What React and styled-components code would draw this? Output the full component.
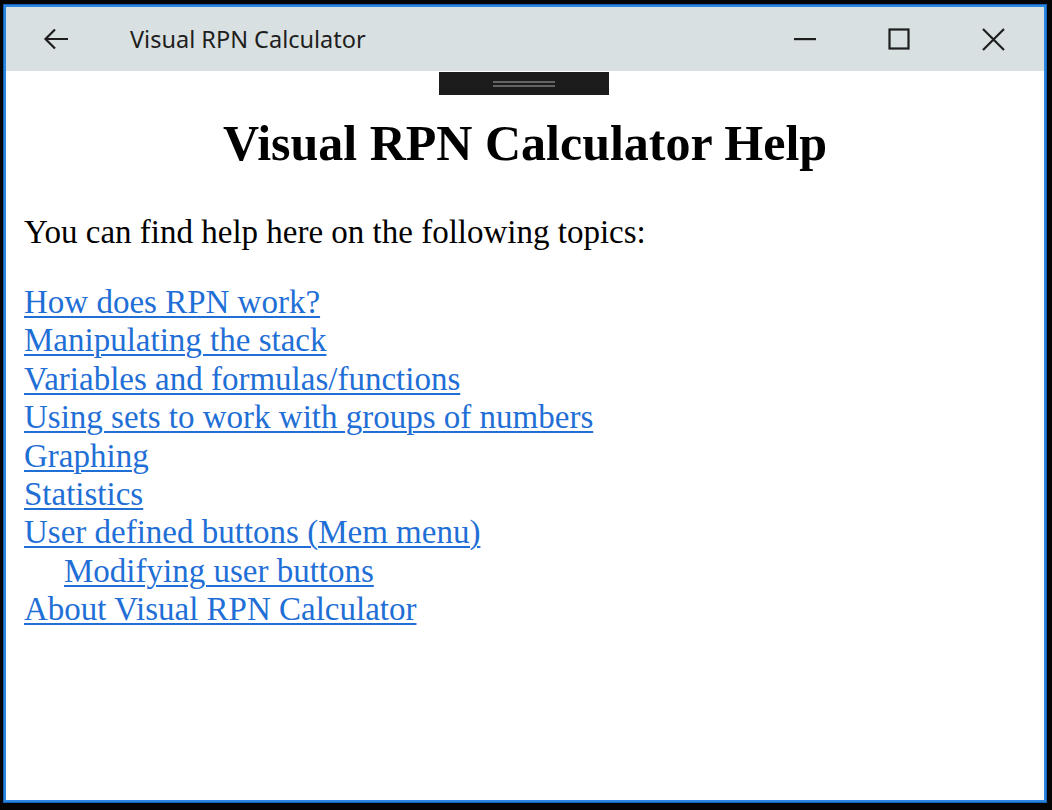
import React from "react";
import styled, { createGlobalStyle } from "styled-components";

const Global = createGlobalStyle`
  html, body { margin: 0; padding: 0; background: #050505; }
  #root { width: 1052px; height: 810px; }
`;

const Screen = styled.div`
  width: 1052px;
  height: 810px;
  box-sizing: border-box;
  padding: 5px 6px 8px 4px;
  background: #050505;
`;

const Window = styled.div`
  height: 100%;
  box-sizing: border-box;
  border: 2px solid #2b88e0;
  outline: 1px solid #1560b8;
  display: flex;
  flex-direction: column;
  background: #fff;
`;

const TitleBar = styled.div`
  height: 64px;
  flex: none;
  display: flex;
  align-items: center;
  padding-right: 4px;
  background: #d9e0e1;
  font-family: "Noto Sans", "Open Sans", sans-serif;
  color: #1e1e1e;
`;

const BackButton = styled.div`
  width: 99px;
  height: 64px;
  display: flex;
  align-items: center;
  justify-content: center;
  box-sizing: border-box;
`;

const Title = styled.div`
  flex: 1;
  font-size: 23.5px;
  padding-left: 25px;
  padding-bottom: 1px;
`;

const CaptionButton = styled.div`
  width: 94px;
  height: 64px;
  display: flex;
  align-items: center;
  justify-content: center;
`;

const Content = styled.div`
  position: relative;
  flex: 1;
  padding: 0 18px;
  font-family: "Liberation Serif", "Times New Roman", serif;
  color: #000;
`;

const Handle = styled.div`
  position: absolute;
  top: 1px;
  left: 433px;
  width: 170px;
  height: 23px;
  background: #1c1c1c;
  display: flex;
  flex-direction: column;
  align-items: center;
  justify-content: center;
  gap: 2px;
`;

const HandleLine = styled.div`
  width: 62px;
  height: 2px;
  background: #636363;
`;

const Heading = styled.h1`
  margin: 0;
  padding-top: 44px;
  text-align: center;
  font-size: 50px;
  line-height: 56px;
  font-weight: bold;
`;

const Intro = styled.p`
  margin: 0;
  padding-top: 42px;
  font-size: 33px;
  line-height: 38px;
`;

const TopicList = styled.div`
  padding-top: 32px;
  display: flex;
  flex-direction: column;
  align-items: flex-start;
`;

const Topic = styled.a`
  font-size: 33px;
  line-height: 38.4px;
  color: #1f6fd6;
  text-decoration: underline;
  text-decoration-thickness: 2px;
  text-underline-offset: 3px;
  margin-left: ${(p) => (p.$indent ? "40px" : "0")};
  cursor: pointer;
`;

const topics = [
  { text: "How does RPN work?" },
  { text: "Manipulating the stack" },
  { text: "Variables and formulas/functions" },
  { text: "Using sets to work with groups of numbers" },
  { text: "Graphing" },
  { text: "Statistics" },
  { text: "User defined buttons (Mem menu)" },
  { text: "Modifying user buttons", indent: true },
  { text: "About Visual RPN Calculator" },
];

export default function App() {
  return (
    <>
      <Global />
      <Screen>
        <Window>
          <TitleBar>
            <BackButton>
              <svg width="26" height="22" viewBox="0 0 26 22" fill="none" stroke="#1e1e1e" strokeWidth="2.2">
                <path d="M25 11H2.5M12 1.5L2.5 11l9.5 9.5" />
              </svg>
            </BackButton>
            <Title>Visual RPN Calculator</Title>
            <CaptionButton>
              <svg width="22" height="4" viewBox="0 0 22 4">
                <rect x="0" y="1" width="22" height="2.2" fill="#1e1e1e" />
              </svg>
            </CaptionButton>
            <CaptionButton>
              <svg width="22" height="22" viewBox="0 0 22 22" fill="none" stroke="#1e1e1e" strokeWidth="2.2">
                <rect x="1.5" y="1.5" width="19" height="19" />
              </svg>
            </CaptionButton>
            <CaptionButton>
              <svg width="23" height="23" viewBox="0 0 23 23" fill="none" stroke="#1e1e1e" strokeWidth="2.2">
                <path d="M1 1l21 21M22 1L1 22" />
              </svg>
            </CaptionButton>
          </TitleBar>
          <Content>
            <Handle>
              <HandleLine />
              <HandleLine />
            </Handle>
            <Heading>Visual RPN Calculator Help</Heading>
            <Intro>You can find help here on the following topics:</Intro>
            <TopicList>
              {topics.map((t) => (
                <Topic key={t.text} $indent={t.indent}>
                  {t.text}
                </Topic>
              ))}
            </TopicList>
          </Content>
        </Window>
      </Screen>
    </>
  );
}
